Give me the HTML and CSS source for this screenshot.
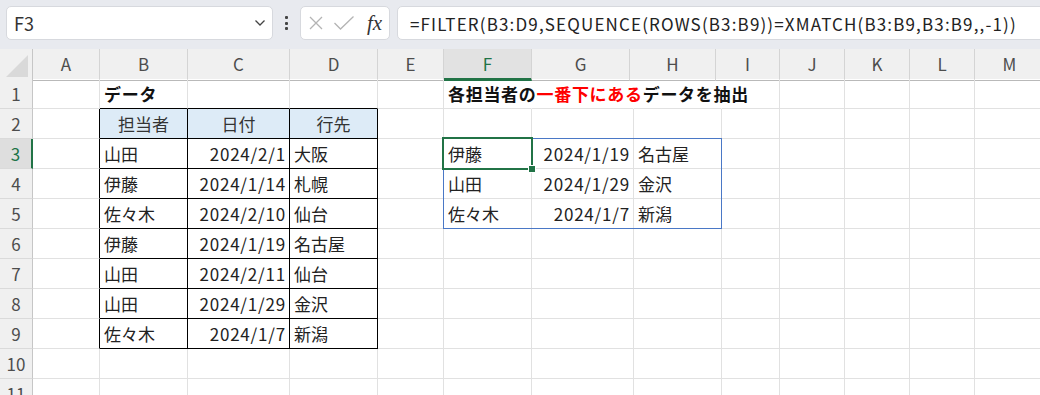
FILE: index.html
```html
<!DOCTYPE html>
<html lang="ja">
<head>
  <meta charset="UTF-8">
  <title>FILTER XMATCH</title>
  <link rel="stylesheet" href="styles.css">
</head>
<body>
  <!-- formula bar -->
  <div class="bar">
    <div class="namebox">
      <span>F3</span>
      <svg class="chev" width="12" height="8" viewBox="0 0 12 8"><path d="M1.5 1.5 L6 6 L10.5 1.5" fill="none" stroke="#444" stroke-width="1.3"/></svg>
    </div>
    <div class="more"><i></i><i></i><i></i></div>
    <div class="fxbox">
      <svg width="16" height="16" viewBox="0 0 16 16"><path d="M2 2 L14 14 M14 2 L2 14" stroke="#b4b4b4" stroke-width="1.3" fill="none"/></svg>
      <svg width="22" height="16" viewBox="0 0 22 16"><path d="M1.5 8 L7.5 14 L20.5 1.5" stroke="#b4b4b4" stroke-width="1.3" fill="none"/></svg>
      <span class="fx">fx</span>
    </div>
    <div class="formula">=FILTER(B3:D9,SEQUENCE(ROWS(B3:B9))=XMATCH(B3:B9,B3:B9,,-1))</div>
  </div>

  <!-- column headers -->
  <div class="cols">
    <div class="corner"><span></span></div>
    <div class="ch">A</div><div class="ch">B</div><div class="ch">C</div><div class="ch">D</div><div class="ch">E</div>
    <div class="ch on">F</div><div class="ch">G</div><div class="ch">H</div><div class="ch">I</div><div class="ch">J</div>
    <div class="ch">K</div><div class="ch">L</div><div class="ch">M</div>
  </div>

  <div class="sheet">
    <div class="grid">
      <!-- row 1 -->
      <div class="rh">1</div><div class="c"></div><div class="c bt title">データ</div><div class="c bt"></div><div class="c bt"></div><div class="c"></div>
      <div class="c nr title">各担当者の<span class="red">一番下にある</span>データを抽出</div><div class="c nr"></div><div class="c nr"></div><div class="c"></div><div class="c"></div><div class="c"></div><div class="c"></div><div class="c"></div>
      <!-- row 2 -->
      <div class="rh">2</div><div class="c bl"></div><div class="c tb hd">担当者</div><div class="c tb hd">日付</div><div class="c tb hd">行先</div><div class="c"></div>
      <div class="c"></div><div class="c"></div><div class="c"></div><div class="c"></div><div class="c"></div><div class="c"></div><div class="c"></div><div class="c"></div>
      <!-- row 3 -->
      <div class="rh on">3</div><div class="c bl"></div><div class="c tb">山田</div><div class="c tb r">2024/2/1</div><div class="c tb">大阪</div><div class="c"></div>
      <div class="c">伊藤</div><div class="c r">2024/1/19</div><div class="c">名古屋</div><div class="c"></div><div class="c"></div><div class="c"></div><div class="c"></div><div class="c"></div>
      <!-- row 4 -->
      <div class="rh">4</div><div class="c bl"></div><div class="c tb">伊藤</div><div class="c tb r">2024/1/14</div><div class="c tb">札幌</div><div class="c"></div>
      <div class="c">山田</div><div class="c r">2024/1/29</div><div class="c">金沢</div><div class="c"></div><div class="c"></div><div class="c"></div><div class="c"></div><div class="c"></div>
      <!-- row 5 -->
      <div class="rh">5</div><div class="c bl"></div><div class="c tb">佐々木</div><div class="c tb r">2024/2/10</div><div class="c tb">仙台</div><div class="c"></div>
      <div class="c">佐々木</div><div class="c r">2024/1/7</div><div class="c">新潟</div><div class="c"></div><div class="c"></div><div class="c"></div><div class="c"></div><div class="c"></div>
      <!-- row 6 -->
      <div class="rh">6</div><div class="c bl"></div><div class="c tb">伊藤</div><div class="c tb r">2024/1/19</div><div class="c tb">名古屋</div><div class="c"></div>
      <div class="c"></div><div class="c"></div><div class="c"></div><div class="c"></div><div class="c"></div><div class="c"></div><div class="c"></div><div class="c"></div>
      <!-- row 7 -->
      <div class="rh">7</div><div class="c bl"></div><div class="c tb">山田</div><div class="c tb r">2024/2/11</div><div class="c tb">仙台</div><div class="c"></div>
      <div class="c"></div><div class="c"></div><div class="c"></div><div class="c"></div><div class="c"></div><div class="c"></div><div class="c"></div><div class="c"></div>
      <!-- row 8 -->
      <div class="rh">8</div><div class="c bl"></div><div class="c tb">山田</div><div class="c tb r">2024/1/29</div><div class="c tb">金沢</div><div class="c"></div>
      <div class="c"></div><div class="c"></div><div class="c"></div><div class="c"></div><div class="c"></div><div class="c"></div><div class="c"></div><div class="c"></div>
      <!-- row 9 -->
      <div class="rh">9</div><div class="c bl"></div><div class="c tb">佐々木</div><div class="c tb r">2024/1/7</div><div class="c tb">新潟</div><div class="c"></div>
      <div class="c"></div><div class="c"></div><div class="c"></div><div class="c"></div><div class="c"></div><div class="c"></div><div class="c"></div><div class="c"></div>
      <!-- row 10 -->
      <div class="rh">10</div><div class="c"></div><div class="c"></div><div class="c"></div><div class="c"></div><div class="c"></div>
      <div class="c"></div><div class="c"></div><div class="c"></div><div class="c"></div><div class="c"></div><div class="c"></div><div class="c"></div><div class="c"></div>
      <!-- row 11 -->
      <div class="rh">11</div><div class="c"></div><div class="c"></div><div class="c"></div><div class="c"></div><div class="c"></div>
      <div class="c"></div><div class="c"></div><div class="c"></div><div class="c"></div><div class="c"></div><div class="c"></div><div class="c"></div><div class="c"></div>
    </div>

    <!-- spill range + active cell -->
    <div class="marks">
      <div class="spill"></div>
      <div class="sel"><i class="handle"></i></div>
    </div>
  </div>
</body>
</html>
```

FILE: styles.css
```css
body {
  margin: 0;
  width: 1040px;
  height: 395px;
  overflow: hidden;
  background: #fff;
  font-family: "Noto Sans CJK JP", sans-serif;
  color: #222;
}

/* formula bar */
.bar {
  display: flex;
  align-items: flex-start;
  height: 49px;
  padding: 6px 0 0 6px;
  box-sizing: border-box;
  background: #e8eaef;
}

.namebox,
.fxbox,
.formula {
  height: 34px;
  box-sizing: border-box;
  background: #fff;
  border: 1px solid #d7d9de;
  border-radius: 5px;
  display: flex;
  align-items: center;
}

.namebox {
  width: 267px;
  padding: 0 6px 0 7px;
  justify-content: space-between;
  font-size: 18px;
  color: #333;
}

.more {
  width: 27px;
  display: flex;
  flex-direction: column;
  align-items: center;
  gap: 2.5px;
  padding-top: 10px;
}

.more i {
  width: 3px;
  height: 3px;
  background: #444;
  border-radius: 1px;
}

.fxbox {
  width: 90px;
  padding: 0 6px 0 7px;
  gap: 9px;
}

.fx {
  font-family: "Liberation Serif", serif;
  font-style: italic;
  font-size: 21px;
  color: #333;
  margin-left: 3px;
}

.formula {
  flex: 1;
  margin-left: 7px;
  margin-right: -8px;
  padding-left: 12px;
  font-size: 17px;
  letter-spacing: 1.15px;
  color: #222;
  white-space: nowrap;
}

/* column headers */
.cols {
  display: grid;
  grid-template-columns: 33px 67px 88px 102px 88px 66px 88px 98px 86px 64px 65px 65px 65px 70px;
  height: 30px;
  background: #f0f0f0;
}

.corner,
.ch {
  box-sizing: border-box;
  border-right: 1px solid #d4d4d4;
  border-bottom: 1px solid #b9b9b9;
}

.corner {
  position: relative;
  border-right-color: #c6c6c6;
}

.corner span {
  position: absolute;
  right: 4px;
  bottom: 3px;
  width: 0;
  height: 0;
  border-left: 22px solid transparent;
  border-bottom: 22px solid #d9d9d9;
}

.ch {
  text-align: center;
  font-size: 17px;
  line-height: 29px;
  color: #4d4d4d;
}

.ch.on {
  color: #217346;
  border-bottom: 3px solid #217346;
  background: #e2e2e2;
}

/* cells */
.sheet {
  position: relative;
}

.grid,
.marks {
  display: grid;
  grid-template-columns: 33px 67px 88px 102px 88px 66px 88px 102px 88px 58px 65px 65px 65px 70px;
  grid-auto-rows: 30px;
}

.marks {
  position: absolute;
  inset: 0;
  grid-template-rows: repeat(11, 30px);
  pointer-events: none;
}

.rh {
  box-sizing: border-box;
  background: #f0f0f0;
  border-right: 1px solid #c6c6c6;
  border-bottom: 1px solid #dadada;
  text-align: center;
  font-size: 17px;
  line-height: 29px;
  color: #4d4d4d;
}

.rh.on {
  background: #dedede;
  color: #217346;
  border-right: 2px solid #217346;
}

.c {
  box-sizing: border-box;
  border-right: 1px solid #e1e1e1;
  border-bottom: 1px solid #e1e1e1;
  padding: 0 4px;
  font-size: 17px;
  line-height: 29px;
  white-space: nowrap;
}

.c.r {
  text-align: right;
  letter-spacing: 0.8px;
  padding-right: 3px;
}

.c.nr {
  border-right-color: transparent;
}

.c.title {
  font-weight: bold;
  color: #111;
  letter-spacing: 0.7px;
}

.red {
  color: #ff0000;
}

.c.bt {
  border-bottom-color: #000;
}

.c.bl {
  border-right-color: #000;
}

.c.tb {
  border-right-color: #000;
  border-bottom-color: #000;
}

.c.hd {
  background: #ddebf7;
  text-align: center;
  color: #333;
}

.spill {
  grid-column: 7 / 10;
  grid-row: 3 / 6;
  margin: -1px 0 0 -1px;
  border: 1px solid #4a78c6;
}

.sel {
  grid-column: 7;
  grid-row: 3;
  position: relative;
  margin: -2px -1px -1px -2px;
  border: 2px solid #217346;
}

.handle {
  position: absolute;
  right: -5px;
  bottom: -5px;
  width: 6px;
  height: 6px;
  background: #217346;
  border: 1px solid #fff;
}
```
